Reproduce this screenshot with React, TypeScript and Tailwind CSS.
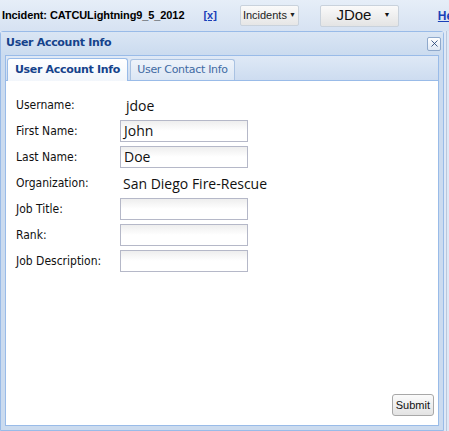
import { X } from 'lucide-react';

const rows: { label: string; kind: 'text' | 'input'; value?: string }[] = [
  { label: 'Username:', kind: 'text', value: 'jdoe' },
  { label: 'First Name:', kind: 'input', value: 'John' },
  { label: 'Last Name:', kind: 'input', value: 'Doe' },
  { label: 'Organization:', kind: 'text', value: 'San Diego Fire-Rescue' },
  { label: 'Job Title:', kind: 'input', value: '' },
  { label: 'Rank:', kind: 'input', value: '' },
  { label: 'Job Description:', kind: 'input', value: '' },
];

export default function App() {
  return (
    <div className="w-[449px] h-[431px] overflow-hidden bg-[#dfe8f6] flex flex-col font-['Liberation_Sans',Arial,sans-serif]">
      {/* top bar */}
      <div className="h-[31px] shrink-0 flex items-center whitespace-nowrap bg-gradient-to-b from-[#e6eef8] to-[#d6e2f2] text-[11px]">
        <span className="shrink-0 pl-[2px] font-bold text-black tracking-[-0.1px]">Incident: CATCULightning9_5_2012</span>
        <a className="shrink-0 ml-[19px] font-bold text-[#1a3fb8] underline">[x]</a>
        <button className="shrink-0 ml-[23px] h-[21px] w-[59px] flex items-center justify-center gap-[2px] rounded-[2px] border border-[#c9d2dc] bg-gradient-to-b from-[#fafafa] to-[#e6e6e6] text-[11px] text-[#222]">
          Incidents <span className="text-[7px]">▼</span>
        </button>
        <button className="shrink-0 ml-[21px] h-[22px] w-[79px] flex items-center justify-center gap-[12px] rounded-[2px] border border-[#c9d2dc] bg-gradient-to-b from-[#fafafa] to-[#e4e4e4] text-[15px] text-[#111] pl-[8px]">
          JDoe <span className="text-[7px]">▼</span>
        </button>
        <a className="shrink-0 ml-[39px] font-bold text-[#1a3fb8] underline text-[12px]">Help</a>
      </div>

      <div className="flex flex-1 min-h-0">
        {/* dialog */}
        <div className="w-[444px] shrink-0 flex flex-col border border-[#99bbe8] bg-[#cbdbef] rounded-t-[3px]">
          <div className="h-[23px] shrink-0 flex items-center justify-between pl-[5px] pr-[2px] bg-gradient-to-b from-[#dae6f4] to-[#cbdbef]">
            <span className="font-['DejaVu_Sans',Verdana,sans-serif] font-bold text-[11px] text-[#15428b] tracking-[-0.3px]">User Account Info</span>
            <button className="w-[14px] h-[14px] flex items-center justify-center rounded-[2px] border border-[#8fa9cc] bg-gradient-to-b from-[#ffffff] to-[#dfe8f4]">
              <X className="w-[11px] h-[11px] text-[#1f3f72]" strokeWidth={1.8} />
            </button>
          </div>

          <div className="flex-1 mx-[4px] mb-[4px] flex flex-col border border-[#99bbe8] bg-white min-h-0">
            {/* tabs */}
            <div className="h-[25px] shrink-0 flex items-end gap-[2px] pl-[1px] bg-gradient-to-b from-[#dfe9f6] to-[#cddcf0] border-b border-[#99bbe8]">
              <div className="h-[23px] w-[121px] -mb-px flex items-center justify-center rounded-t-[3px] border border-b-0 border-[#99bbe8] bg-gradient-to-b from-[#ffffff] to-[#f2f6fb] font-['DejaVu_Sans',Verdana,sans-serif] font-bold text-[11px] text-[#15428b] tracking-[-0.3px]">
                User Account Info
              </div>
              <div className="h-[21px] w-[105px] flex items-center justify-center rounded-t-[3px] border border-b-0 border-[#a9c2e2] bg-gradient-to-b from-[#eef3fa] to-[#dbe6f4] font-['DejaVu_Sans',Verdana,sans-serif] text-[11px] text-[#416aa3] tracking-[-0.3px]">
                User Contact Info
              </div>
            </div>

            {/* body */}
            <div className="flex-1 flex flex-col pt-[11px] pl-[10px] pr-[4px] pb-[9px]">
              <div className="flex flex-col">
                {rows.map((r) => (
                  <div key={r.label} className="h-[26px] flex items-center">
                    <span className="w-[104px] font-['DejaVu_Sans_Condensed','DejaVu_Sans',sans-serif] text-[12px] text-[#111]">{r.label}</span>
                    {r.kind === 'text' ? (
                      <span className={`font-['Open_Sans',sans-serif] text-[14px] text-[#111] ${r.label === 'Username:' ? 'pl-[6px]' : 'pl-[3px]'}`}>{r.value}</span>
                    ) : (
                      <div className="w-[128px] h-[22px] border border-[#b5b8c8] bg-gradient-to-b from-[#eeeeee] via-[#ffffff] to-[#ffffff] flex items-center pl-[3px] font-['Open_Sans',sans-serif] text-[14px] text-[#111] leading-none">
                        {r.value}
                      </div>
                    )}
                  </div>
                ))}
              </div>
              <div className="mt-auto flex justify-end">
                <button className="h-[22px] px-[3px] rounded-[3px] border border-[#a8a8a8] bg-gradient-to-b from-[#fbfbfb] to-[#e3e3e3] text-[11px] text-[#111]">
                  Submit
                </button>
              </div>
            </div>
          </div>
        </div>
        <div className="flex-1 border-l border-[#b8c8dc] ml-[2px]" />
      </div>
    </div>
  );
}
